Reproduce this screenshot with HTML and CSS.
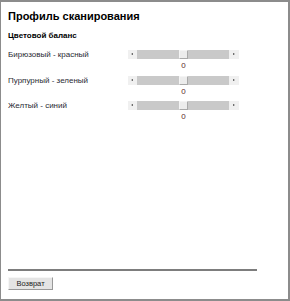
FILE: index.html
```html
<!DOCTYPE html>
<html lang="ru">
<head>
    <meta charset="UTF-8">
    <title>Профиль сканирования</title>
    <link rel="stylesheet" href="styles.css">
</head>
<body>
    <div class="page">
        <h1 class="titulo">Профиль сканирования</h1>
        <h2 class="secao">Цветовой баланс</h2>

        <div class="linhas">
            <div class="linha">
                <span class="rotulo">Бирюзовый - красный</span>
                <div class="barra">
                    <span class="seta seta-esq"></span>
                    <span class="trilho"><span class="polegar"></span></span>
                    <span class="seta seta-dir"></span>
                </div>
                <span class="valor">0</span>
            </div>
            <div class="linha">
                <span class="rotulo">Пурпурный - зеленый</span>
                <div class="barra">
                    <span class="seta seta-esq"></span>
                    <span class="trilho"><span class="polegar"></span></span>
                    <span class="seta seta-dir"></span>
                </div>
                <span class="valor">0</span>
            </div>
            <div class="linha">
                <span class="rotulo">Желтый - синий</span>
                <div class="barra">
                    <span class="seta seta-esq"></span>
                    <span class="trilho"><span class="polegar"></span></span>
                    <span class="seta seta-dir"></span>
                </div>
                <span class="valor">0</span>
            </div>
        </div>

        <div class="rodape">
            <div class="divisor"></div>
            <button class="botao">Возврат</button>
        </div>
    </div>
</body>
</html>
```

FILE: styles.css
```css
body {
    margin: 0;
    font-family: "Liberation Sans", Arial, sans-serif;
    background-color: #fff;
    color: #000;
}
.page {
    box-sizing: border-box;
    width: 290px;
    height: 301px;
    border-top: 2px solid #8c8c8c;
    border-left: 1px solid #8c8c8c;
    border-right: 2px solid #8c8c8c;
    border-bottom: 2px solid #8c8c8c;
    padding: 0 0 9px 7px;
    display: flex;
    flex-direction: column;
}
.titulo {
    font-size: 11px;
    line-height: 13px;
    font-weight: bold;
    margin: 8px 0 0 0;
}
.secao {
    font-size: 8px;
    line-height: 10px;
    font-weight: bold;
    margin: 8px 0 0 0;
}
.linhas {
    margin-top: 9px;
    display: flex;
    flex-direction: column;
    gap: 4.5px;
}
.linha {
    display: grid;
    grid-template-columns: 120px 111px;
    align-items: center;
}
.rotulo {
    font-size: 8px;
    line-height: 9px;
    color: #2a2a33;
}
.barra {
    display: flex;
    height: 9px;
}
.seta {
    width: 9px;
    background-color: #f0f0f0;
    position: relative;
}
.seta-dir {
    width: 10px;
}
.seta-esq::after,
.seta-dir::after {
    content: "";
    position: absolute;
    top: 3px;
    border-top: 1.5px solid transparent;
    border-bottom: 1.5px solid transparent;
}
.seta-esq::after {
    left: 3px;
    border-right: 2px solid #444;
}
.seta-dir::after {
    left: 4px;
    border-left: 2px solid #444;
}
.trilho {
    flex: 1;
    background-color: #c9c9c9;
    display: flex;
    justify-content: center;
}
.polegar {
    box-sizing: border-box;
    width: 9px;
    height: 9px;
    background-color: #ececec;
    border: 1px solid #a9a9a9;
    border-top-color: #f4f4f4;
    border-left-color: #f4f4f4;
}
.valor {
    grid-column: 2;
    text-align: center;
    font-size: 8px;
    line-height: 10px;
    margin-top: 2px;
    color: #5c2a2a;
}
.rodape {
    margin-top: auto;
}
.divisor {
    width: 249px;
    height: 2px;
    background-color: #7d7d7d;
}
.botao {
    display: block;
    margin-top: 6px;
    box-sizing: border-box;
    width: 45px;
    height: 13px;
    padding: 0;
    font-family: "Liberation Sans", Arial, sans-serif;
    font-size: 7.5px;
    color: #222;
    background-color: #e4e4e4;
    border: 1px solid #999;
    border-top-color: #f6f6f6;
    border-left-color: #f6f6f6;
}
```
